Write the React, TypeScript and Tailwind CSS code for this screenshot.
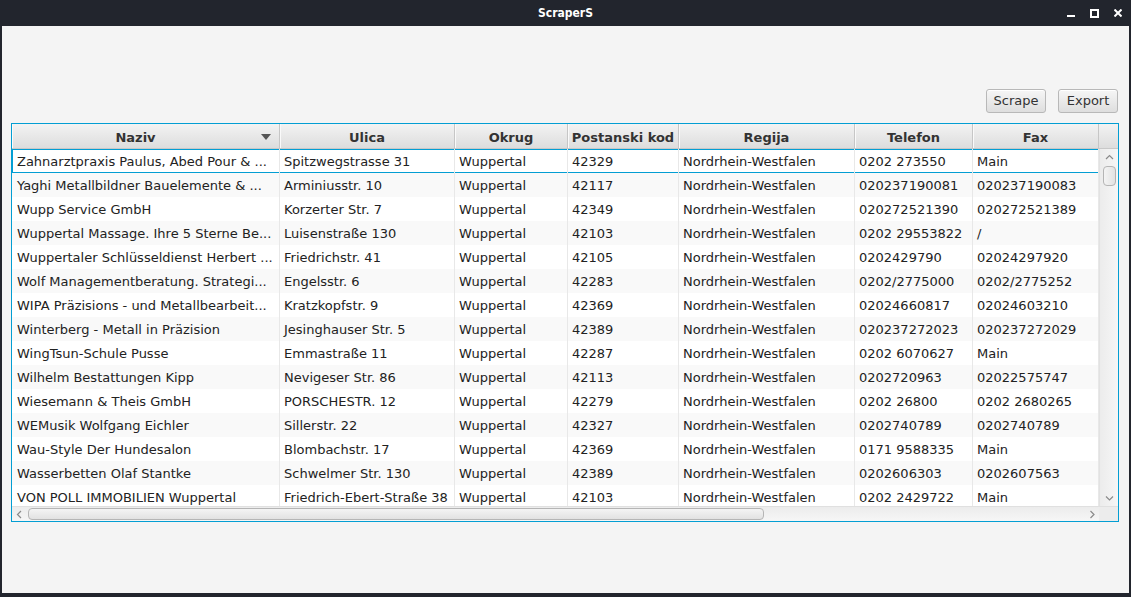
const rows = [
  ["Zahnarztpraxis Paulus, Abed Pour & ...", "Spitzwegstrasse 31", "Wuppertal", "42329", "Nordrhein-Westfalen", "0202 273550", "Main"],
  ["Yaghi Metallbildner Bauelemente & ...", "Arminiusstr. 10", "Wuppertal", "42117", "Nordrhein-Westfalen", "020237190081", "020237190083"],
  ["Wupp Service GmbH", "Korzerter Str. 7", "Wuppertal", "42349", "Nordrhein-Westfalen", "020272521390", "020272521389"],
  ["Wuppertal Massage. Ihre 5 Sterne Be...", "Luisenstraße 130", "Wuppertal", "42103", "Nordrhein-Westfalen", "0202 29553822", "/"],
  ["Wuppertaler Schlüsseldienst Herbert ...", "Friedrichstr. 41", "Wuppertal", "42105", "Nordrhein-Westfalen", "0202429790", "02024297920"],
  ["Wolf Managementberatung. Strategi...", "Engelsstr. 6", "Wuppertal", "42283", "Nordrhein-Westfalen", "0202/2775000", "0202/2775252"],
  ["WIPA Präzisions - und Metallbearbeit...", "Kratzkopfstr. 9", "Wuppertal", "42369", "Nordrhein-Westfalen", "02024660817", "02024603210"],
  ["Winterberg - Metall in Präzision", "Jesinghauser Str. 5", "Wuppertal", "42389", "Nordrhein-Westfalen", "020237272023", "020237272029"],
  ["WingTsun-Schule Pusse", "Emmastraße 11", "Wuppertal", "42287", "Nordrhein-Westfalen", "0202 6070627", "Main"],
  ["Wilhelm Bestattungen Kipp", "Nevigeser Str. 86", "Wuppertal", "42113", "Nordrhein-Westfalen", "0202720963", "02022575747"],
  ["Wiesemann & Theis GmbH", "PORSCHESTR. 12", "Wuppertal", "42279", "Nordrhein-Westfalen", "0202 26800", "0202 2680265"],
  ["WEMusik Wolfgang Eichler", "Sillerstr. 22", "Wuppertal", "42327", "Nordrhein-Westfalen", "0202740789", "0202740789"],
  ["Wau-Style Der Hundesalon", "Blombachstr. 17", "Wuppertal", "42369", "Nordrhein-Westfalen", "0171 9588335", "Main"],
  ["Wasserbetten Olaf Stantke", "Schwelmer Str. 130", "Wuppertal", "42389", "Nordrhein-Westfalen", "0202606303", "0202607563"],
  ["VON POLL IMMOBILIEN Wuppertal", "Friedrich-Ebert-Straße 38", "Wuppertal", "42103", "Nordrhein-Westfalen", "0202 2429722", "Main"],
];

const cols = [
  { label: "Naziv", w: "w-[268px]" },
  { label: "Ulica", w: "w-[175px]" },
  { label: "Okrug", w: "w-[113px]" },
  { label: "Postanski kod", w: "w-[111px]" },
  { label: "Regija", w: "w-[176px]" },
  { label: "Telefon", w: "w-[118px]" },
  { label: "Fax", w: "w-[126px]" },
];

const Chevron = ({ dir }: { dir: "up" | "down" | "left" | "right" }) => {
  const d = {
    up: "M1 5 L4.5 1.5 L8 5",
    down: "M1 1.5 L4.5 5 L8 1.5",
    left: "M5 1 L1.5 4.5 L5 8",
    right: "M1.5 1 L5 4.5 L1.5 8",
  }[dir];
  const vertical = dir === "up" || dir === "down";
  return (
    <svg width={vertical ? 9 : 7} height={vertical ? 7 : 9} viewBox={vertical ? "0 0 9 7" : "0 0 7 9"}>
      <path d={d} fill="none" stroke="#8a8a8a" strokeWidth="1.2" />
    </svg>
  );
};

const WindowButtons = () => (
  <div className="flex items-center gap-[15px] pr-[9px]">
    <svg width="8" height="8" viewBox="0 0 8 8">
      <rect x="0" y="6" width="8" height="2" fill="#fff" />
    </svg>
    <svg width="9" height="9" viewBox="0 0 9 9">
      <rect x="1" y="1" width="7" height="7" fill="none" stroke="#fff" strokeWidth="2" />
    </svg>
    <svg width="8" height="8" viewBox="0 0 8 8">
      <path d="M0.5 0.5 L7.5 7.5 M7.5 0.5 L0.5 7.5" stroke="#fff" strokeWidth="2" />
    </svg>
  </div>
);

const Button = ({ children }: { children: string }) => (
  <button className="h-[24px] w-[60px] rounded-[3px] border border-[#b8b8b8] bg-gradient-to-b from-[#f6f6f6] to-[#dedede] text-[13px] text-[#333] shadow-[inset_0_1px_0_#ffffff]">
    {children}
  </button>
);

export default function App() {
  return (
    <div className="w-[1131px] h-[597px] bg-[#22252d] flex flex-col font-['DejaVu_Sans',sans-serif] overflow-hidden">
      {/* title bar */}
      <div className="h-[26px] flex items-center relative shrink-0">
        <div className="absolute inset-0 flex items-center justify-center text-[12px] font-bold text-white font-['DejaVu_Sans_Condensed','DejaVu_Sans',sans-serif]">
          ScraperS
        </div>
        <div className="ml-auto relative">
          <WindowButtons />
        </div>
      </div>

      {/* content */}
      <div className="flex-1 mx-[2px] mb-[4px] bg-[#f4f4f4] flex flex-col pl-[9px] pr-[10px] pt-[63px]">
        <div className="flex justify-end gap-[12px] pr-[1px]">
          <Button>Scrape</Button>
          <Button>Export</Button>
        </div>

        {/* table */}
        <div className="mt-[10px] w-[1108px] border border-[#039ed3] bg-white flex flex-col shadow-[inset_0_0_0_1px_#b9e3f3]">
          {/* header */}
          <div className="h-[25px] flex bg-gradient-to-b from-[#f3f3f3] to-[#dddddd] border-b border-[#c8c8c8]">
            {cols.map((c, i) => (
              <div
                key={c.label}
                className={`${c.w} shrink-0 relative flex items-center justify-center pt-[3px] border-r border-[#c6c6c6] shadow-[inset_1px_0_0_#fafafa] text-[13px] font-bold text-[#333]`}
              >
                <span className={i === 0 ? "pr-[20px]" : ""}>{c.label}</span>
                {i === 0 && (
                  <svg className="absolute right-[8px] top-[10px]" width="10" height="6" viewBox="0 0 10 6">
                    <path d="M0 0 L10 0 L5 6 Z" fill="#555" />
                  </svg>
                )}
              </div>
            ))}
            <div className="flex-1" />
          </div>

          {/* body */}
          <div className="h-[357px] flex overflow-hidden">
            <div className="w-[1087px] flex flex-col">
              {rows.map((r, ri) => (
                <div
                  key={ri}
                  className={`h-[24px] shrink-0 flex ${ri % 2 === 1 ? "bg-[#f9f9f9]" : "bg-white"} ${ri === 0 ? "shadow-[inset_0_0_0_1px_#039ed3]" : ""}`}
                >
                  {r.map((cell, ci) => (
                    <div
                      key={ci}
                      className={`${cols[ci].w} ${ci === 0 ? "pl-[5px]" : "pl-[4px]"} shrink-0 h-full flex items-center pr-[2px] pt-[2px] border-r border-[#e8e8e8] overflow-hidden whitespace-nowrap text-[13px] text-[#222]`}
                    >
                      {cell}
                    </div>
                  ))}
                </div>
              ))}
            </div>
            {/* vertical scrollbar */}
            <div className="flex-1 flex flex-col items-center bg-gradient-to-r from-[#ececec] to-[#f6f6f6] border-l border-[#e2e2e2]">
              <div className="h-[14px] flex items-center justify-center mt-[1px]">
                <Chevron dir="up" />
              </div>
              <div className="mt-[2px] w-[13px] h-[20px] rounded-[4px] border border-[#b5b5b5] bg-gradient-to-r from-[#f4f4f4] to-[#e2e2e2] ml-[1px]" />
              <div className="flex-1" />
              <div className="h-[14px] flex items-center justify-center mb-[1px]">
                <Chevron dir="down" />
              </div>
            </div>
          </div>

          {/* horizontal scrollbar */}
          <div className="h-[15px] flex bg-[#eeeeee] border-t border-[#e0e0e0]">
            <div className="w-[1087px] flex items-center bg-gradient-to-b from-[#ececec] to-[#f6f6f6]">
              <div className="w-[14px] flex items-center justify-center">
                <Chevron dir="left" />
              </div>
              <div className="w-[736px] h-[12px] ml-[2px] rounded-[4px] border border-[#b5b5b5] bg-gradient-to-b from-[#f4f4f4] to-[#e2e2e2]" />
              <div className="flex-1" />
              <div className="w-[14px] flex items-center justify-center">
                <Chevron dir="right" />
              </div>
            </div>
            <div className="flex-1 bg-[#ececec]" />
          </div>
        </div>
      </div>
    </div>
  );
}
